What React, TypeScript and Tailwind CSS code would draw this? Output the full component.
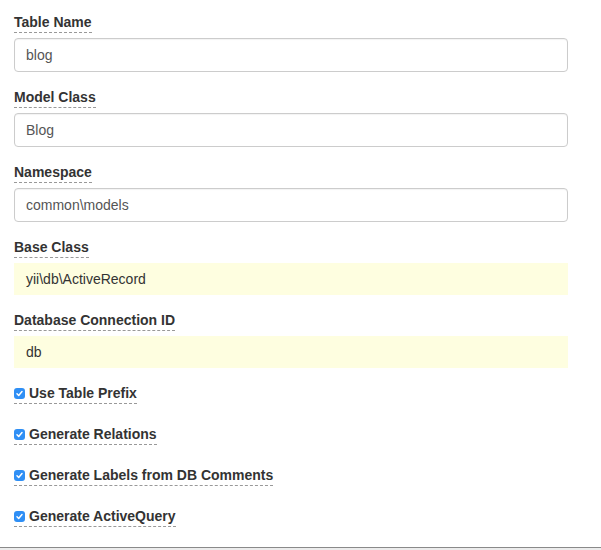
import React from "react";

const font = { fontFamily: '"Liberation Sans", Arial, Helvetica, sans-serif' };

function Field({ label, value, sticky }: { label: string; value: string; sticky?: boolean }) {
  return (
    <div className="mb-[15px]">
      <div className="flex">
        <label className="border-b border-dashed border-[#999] text-[14px] leading-[20px] font-bold text-[#333]">
          {label}
        </label>
      </div>
      <div
        className={
          sticky
            ? "mt-[5px] h-[32px] w-[554px] bg-[#fefee0] pl-[12px] text-[14px] leading-[32px] text-[#333]"
            : "mt-[5px] h-[34px] w-[554px] rounded-[4px] border border-[#ccc] bg-white pl-[11px] text-[14px] leading-[32px] text-[#555] shadow-[inset_0_1px_1px_rgba(0,0,0,0.05)]"
        }
      >
        {value}
      </div>
    </div>
  );
}

function Check({ label }: { label: string }) {
  return (
    <div className="mb-[20px] flex">
      <label className="flex items-center border-b border-dashed border-[#999] text-[14px] leading-[20px] font-bold text-[#333]">
        <span className="mr-[4px] mt-[1px] flex h-[11px] w-[11px] items-center justify-center rounded-[3px] bg-[#2f8ff5]">
          <svg width="9" height="9" viewBox="0 0 9 9">
            <path d="M2 4.8 L3.7 6.5 L7 2.6" fill="none" stroke="white" strokeWidth="1.5" strokeLinecap="round" strokeLinejoin="round" />
          </svg>
        </span>
        {label}
      </label>
    </div>
  );
}

export default function App() {
  return (
    <div className="h-[550px] w-[601px] overflow-hidden bg-white" style={font}>
      <div className="pl-[14px] pt-[12px]">
        <Field label="Table Name" value="blog" />
        <Field label="Model Class" value="Blog" />
        <Field label="Namespace" value="common\models" />
        <Field label="Base Class" value="yii\db\ActiveRecord" sticky />
        <Field label="Database Connection ID" value="db" sticky />
        <Check label="Use Table Prefix" />
        <Check label="Generate Relations" />
        <Check label="Generate Labels from DB Comments" />
        <Check label="Generate ActiveQuery" />
      </div>
      <div className="h-[4px] border-t border-[#8a8a8a] bg-[#ececec]" />
    </div>
  );
}
